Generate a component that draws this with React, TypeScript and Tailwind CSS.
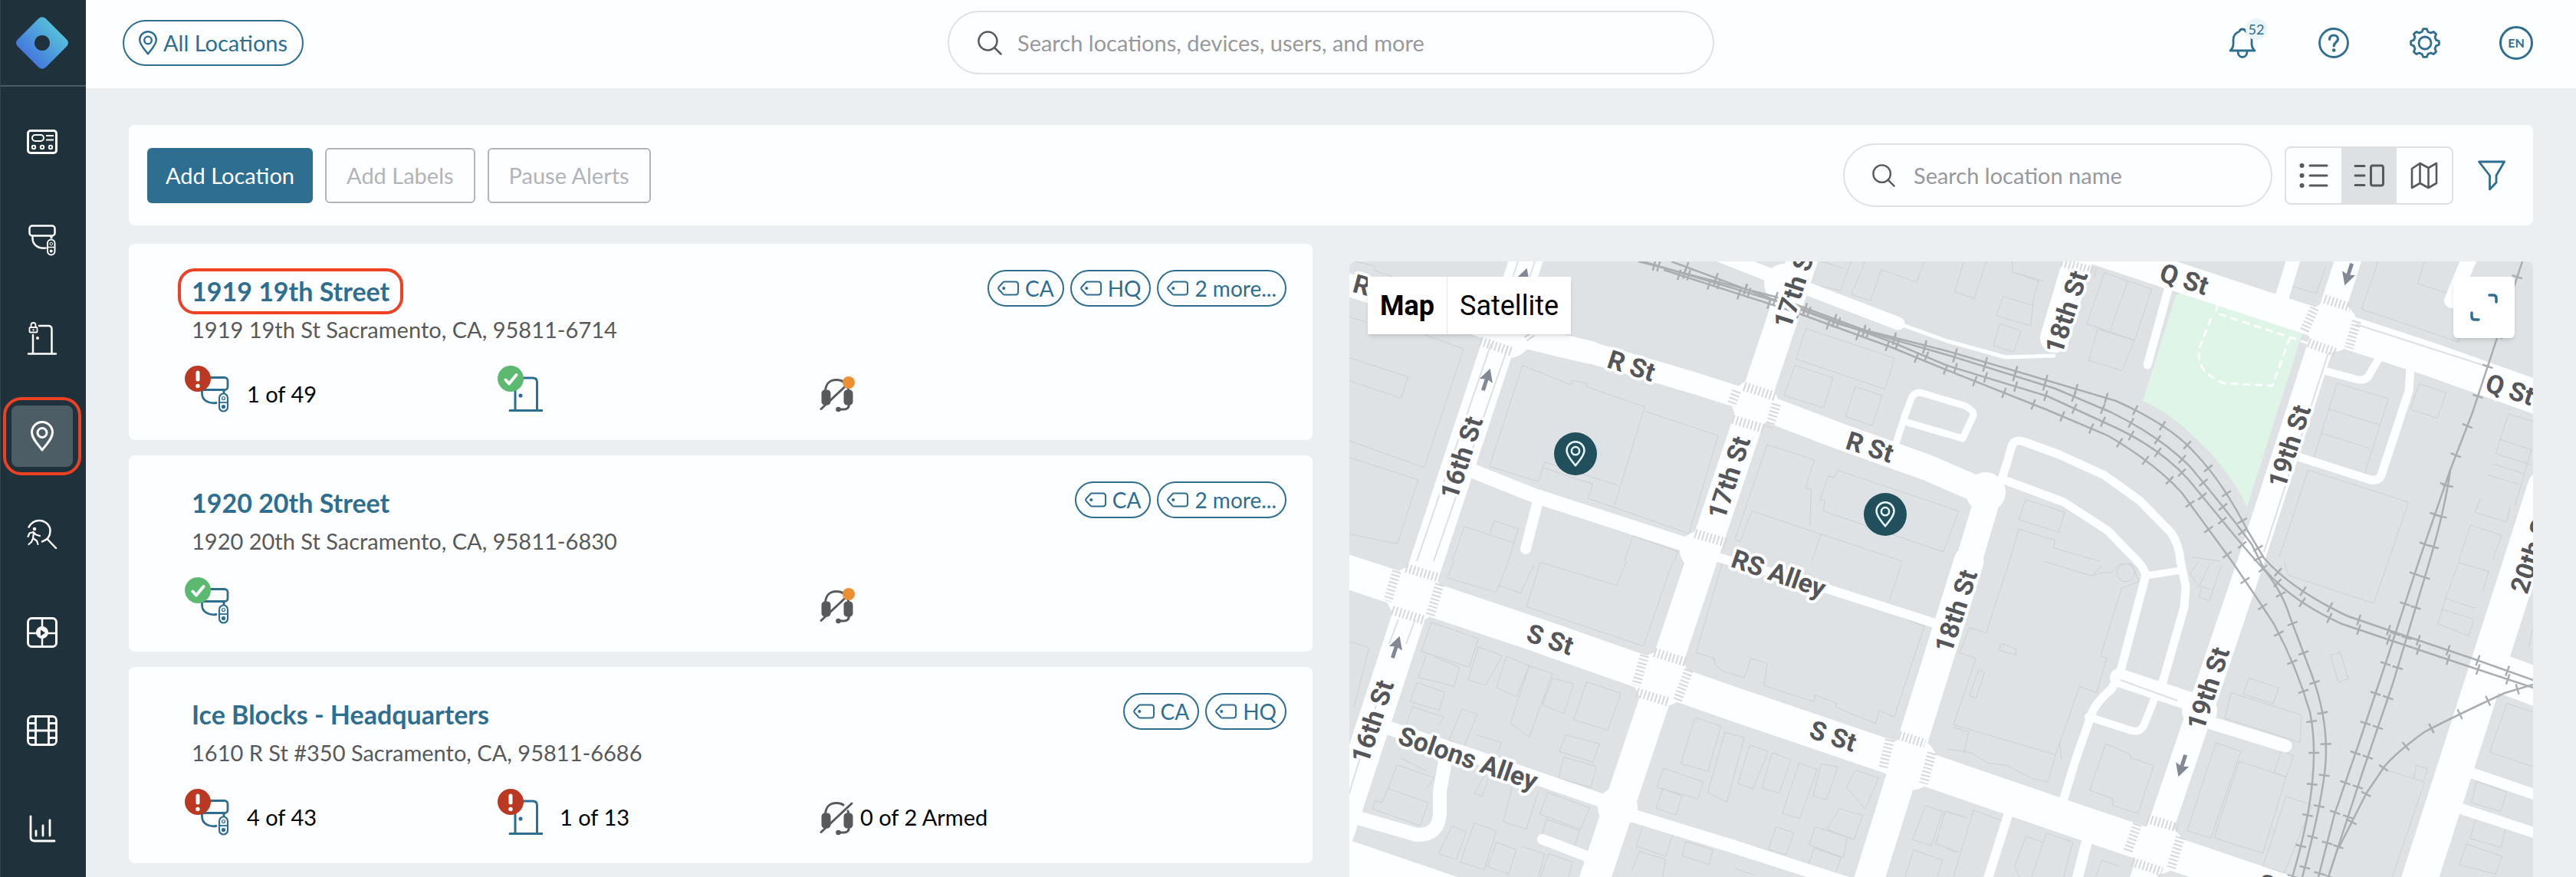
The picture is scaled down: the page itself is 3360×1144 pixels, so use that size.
import React from "react";

type IconProps = { className?: string };

/* ---------- icons ---------- */

function Logo() {
  return (
    <svg viewBox="0 0 68 68" className="size-[68px]" aria-hidden="true">
      <defs>
        <linearGradient id="logo-fill" x1="0.15" y1="0.8" x2="0.8" y2="0.2">
          <stop offset="0" stopColor="#4272dd" />
          <stop offset="1" stopColor="#57c1da" />
        </linearGradient>
      </defs>
      <path
        fillRule="evenodd"
        fill="url(#logo-fill)"
        d="M29 2.500 Q34 -2 39 2.500 L66 29.500 Q70 34 66 38.500 L39 65.500 Q34 70 29 65.500 L2 38.500 Q-2 34 2 29.500 Z M34 24 a10 10 0 1 0 0.010 0 Z"
      />
    </svg>
  );
}

function PinIcon({ className }: IconProps) {
  return (
    <svg viewBox="0 0 30 40" className={className} fill="none" stroke="currentColor" aria-hidden="true">
      <path d="M15 38 C9 30 1.500 23 1.500 15 a13.500 13.500 0 0 1 27 0 C28.500 23 21 30 15 38 Z" strokeLinejoin="round" />
      <circle cx="15" cy="15.500" r="6" />
    </svg>
  );
}

function PanelIcon() {
  return (
    <svg viewBox="0 0 40 32" className="h-8 w-10" fill="none" stroke="currentColor" strokeWidth="2" aria-hidden="true">
      <rect x="1.500" y="1.500" width="37" height="29" rx="3.500" strokeWidth="3" />
      <rect x="7" y="7" width="15" height="8" rx="4" />
      <path d="M25 8h10M25 13.500h10" />
      <circle cx="9" cy="23" r="2.200" />
      <circle cx="20" cy="23" r="2.200" />
      <circle cx="31" cy="23" r="2.200" />
    </svg>
  );
}

function CameraIcon() {
  return (
    <svg viewBox="0 0 40 44" className="h-11 w-10" fill="none" stroke="currentColor" strokeWidth="2.500" aria-hidden="true">
      <rect x="3.500" y="3.500" width="33" height="13" rx="3.500" />
      <path d="M7.500 17v3c0 8 7 13.500 17 12.500" strokeLinecap="round" />
      <path d="M32 17v3" strokeWidth="3" />
      <rect x="27" y="21.500" width="9.500" height="20" rx="4.700" strokeWidth="2" />
      <path d="M27 31.500h9.500" strokeWidth="1.500" />
      <circle cx="31.700" cy="27" r="1.800" strokeWidth="1" />
      <circle cx="31.700" cy="36.500" r="1.600" fill="currentColor" strokeWidth="1" />
    </svg>
  );
}

function DoorLockIcon() {
  return (
    <svg viewBox="0 0 40 44" className="h-11 w-10" fill="none" stroke="currentColor" strokeWidth="2.500" strokeLinecap="round" aria-hidden="true">
      <path d="M2 42.500h36M8 18v24M16 6h12q4.500 0 4.500 4.500v31.500" />
      <circle cx="14" cy="22" r="1.200" fill="currentColor" strokeWidth="1.500" />
      <rect x="3.500" y="8" width="10" height="6.500" rx="1" strokeWidth="1.800" />
      <path d="M5.500 8V5q0-3 3-3t3 3v3" strokeWidth="1.800" />
      <circle cx="8.500" cy="11.300" r="0.800" fill="currentColor" strokeWidth="0.800" />
    </svg>
  );
}

function PersonSearchIcon() {
  return (
    <svg viewBox="0 0 40 40" className="size-10" fill="none" stroke="currentColor" strokeWidth="2.500" strokeLinecap="round" strokeLinejoin="round" aria-hidden="true">
      <path d="M2.500 10.500C6 4.500 11 2 16 2c8 0 14.500 6 14.500 13.500 0 8-4.500 12-10.500 14M26.500 26 38 38" />
      <circle cx="10" cy="13" r="2.300" fill="currentColor" stroke="none" />
      <path d="M1.500 23l2-4.500 5-1.500 3.500 3.500 5 1.500M9 18.500 8 25l5 3.500 1.500 4.500M7.500 26.500 6 30l-3.500 3" strokeWidth="2.200" />
    </svg>
  );
}

function PlayGridIcon() {
  return (
    <svg viewBox="0 0 40 40" className="size-10" fill="none" stroke="currentColor" aria-hidden="true">
      <rect x="1.500" y="1.500" width="37" height="37" rx="5" strokeWidth="3" />
      <path d="M20 2v36M2 21h36" strokeWidth="2.500" />
      <circle cx="20" cy="20" r="8" fill="currentColor" stroke="none" />
      <path d="M18 16.500 24 20.500l-6 4Z" fill="#1f313a" stroke="none" />
    </svg>
  );
}

function FilmIcon() {
  return (
    <svg viewBox="0 0 40 40" className="size-10" fill="none" stroke="currentColor" strokeWidth="2.800" aria-hidden="true">
      <rect x="1.500" y="1.500" width="37" height="37" rx="5" />
      <path d="M11.500 2v36M28.500 2v36M2 20h36M2 10.500h9M29 10.500h9M2 29.500h9M29 29.500h9" />
    </svg>
  );
}

function ChartIcon() {
  return (
    <svg viewBox="0 0 36 36" className="size-9" fill="none" stroke="currentColor" strokeWidth="2.800" strokeLinecap="round" aria-hidden="true">
      <path d="M3 2v27q0 5 5 5h26" />
      <path d="M10 21v6M19 14v13M28 7v20" />
    </svg>
  );
}

function SearchIcon({ className }: IconProps) {
  return (
    <svg viewBox="0 0 32 32" className={className} fill="none" stroke="#58595b" strokeWidth="2.500" strokeLinecap="round" aria-hidden="true">
      <circle cx="13.500" cy="13.500" r="12" />
      <path d="M22 22 30.500 30.500" />
    </svg>
  );
}

function BellIcon() {
  return (
    <svg viewBox="0 0 36 40" className="h-10 w-9" fill="none" stroke="currentColor" strokeWidth="2.800" strokeLinecap="round" strokeLinejoin="round" aria-hidden="true">
      <path d="M2 30h32c-3-2.500-4-5-4-9v-5c0-7-3.500-9.500-8-11C21 1 15 1 14 5c-4.500 1.500-8 4-8 11v5c0 4-1 6.500-4 9Z" />
      <path d="M12 31c0 4.500 2.500 7.500 6 7.500s6-3 6-7.500" />
    </svg>
  );
}

function HelpIcon() {
  return (
    <svg viewBox="0 0 40 40" className="size-10" fill="none" stroke="currentColor" strokeWidth="2.800" aria-hidden="true">
      <circle cx="20" cy="20" r="18.500" />
      <path d="M14.500 15.500c0-3.500 2.300-5.500 5.500-5.500s5.500 2 5.500 5c0 4-5.300 4-5.300 9" strokeWidth="3.200" strokeLinecap="round" />
      <circle cx="20.200" cy="29.500" r="2.300" fill="currentColor" stroke="none" />
    </svg>
  );
}

function GearIcon() {
  const teeth = Array.from({ length: 8 }, (_, i) => {
    const at = (deg: number, r: number) => {
      const a = ((i * 45 + deg) * Math.PI) / 180;
      return `${(20 + r * Math.sin(a)).toFixed(2)} ${(20 - r * Math.cos(a)).toFixed(2)}`;
    };
    return `${i === 0 ? "M" : "L"}${at(-15, 15)} L${at(-7, 18.5)} L${at(7, 18.5)} L${at(15, 15)}`;
  }).join(" ");
  return (
    <svg viewBox="0 0 40 40" className="size-10" fill="none" stroke="currentColor" strokeWidth="2.800" strokeLinejoin="round" aria-hidden="true">
      <path d={`${teeth} Z`} />
      <circle cx="20" cy="20" r="8" />
    </svg>
  );
}

function ListIcon() {
  return (
    <svg viewBox="0 0 38 34" className="h-[34px] w-[38px]" stroke="#58595b" strokeWidth="3" strokeLinecap="round" aria-hidden="true">
      <path d="M14 4h22M14 17h22M14 30h22" />
      <g fill="#58595b" stroke="none">
        <circle cx="3.500" cy="4" r="3" />
        <circle cx="3.500" cy="17" r="3" />
        <circle cx="3.500" cy="30" r="3" />
      </g>
    </svg>
  );
}

function SplitIcon() {
  return (
    <svg viewBox="0 0 40 30" className="h-[30px] w-10" fill="none" stroke="#58595b" strokeWidth="3" strokeLinecap="round" aria-hidden="true">
      <path d="M2 2.500h12M2 15h12M2 27.500h12" />
      <rect x="22.500" y="2" width="16" height="26" rx="2.500" />
    </svg>
  );
}

function FoldedMapIcon() {
  return (
    <svg viewBox="0 0 36 36" className="size-9" fill="none" stroke="#58595b" strokeWidth="2.600" strokeLinejoin="round" aria-hidden="true">
      <path d="M2 9 12.500 2 23.500 8 34 2v26l-10.500 6-11-6L2 34ZM12.500 2v26M23.500 8v26" />
    </svg>
  );
}

function FilterIcon() {
  return (
    <svg viewBox="0 0 36 40" className="h-10 w-9" fill="none" stroke="currentColor" strokeWidth="2.800" strokeLinejoin="round" aria-hidden="true">
      <path d="M1.500 2h33L24 20v9L15.500 38V20Z" />
    </svg>
  );
}

function TagIcon() {
  return (
    <svg viewBox="0 0 28 20" className="h-5 w-7" fill="none" stroke="currentColor" strokeWidth="2" strokeLinejoin="round" aria-hidden="true">
      <path d="M9 1.500h14.500q3.500 0 3.500 3.500v10q0 3.500-3.500 3.500H9q-1 0-1.800-1L1.700 11.500q-1-1.500 0-3L7.200 2.500q.8-1 1.800-1Z" />
      <circle cx="8.300" cy="10" r="1.600" fill="currentColor" strokeWidth="1" />
    </svg>
  );
}

type Status = "alert" | "ok";

function StatusBadge({ status }: { status: Status }) {
  if (status === "alert") {
    return (
      <g>
        <circle cx="18" cy="18" r="17" fill="#bb3922" />
        <path d="M18 10v9" stroke="#fff" strokeWidth="5" strokeLinecap="round" />
        <circle cx="18" cy="27.500" r="2.700" fill="#fff" />
      </g>
    );
  }
  return (
    <g>
      <circle cx="18" cy="18" r="17" fill="#5cba70" />
      <path d="M11.500 19.500 16 24.500 25.500 13" fill="none" stroke="#fff" strokeWidth="4" strokeLinecap="round" strokeLinejoin="round" />
    </g>
  );
}

function CameraStatus({ status }: { status: Status }) {
  return (
    <svg viewBox="0 0 60 62" className="h-[62px] w-[60px]" role="img" aria-label={`Cameras: ${status}`}>
      <g fill="none" stroke="#2e6e91" strokeWidth="2.800">
        <rect x="20" y="16.500" width="37" height="16" rx="4" />
        <path d="M23.500 33v4c0 9 8 14 18.500 12.500" strokeLinecap="round" />
        <path d="M52 33v4" strokeWidth="3" />
        <rect x="46" y="37.500" width="11" height="23" rx="5.500" strokeWidth="2.200" />
        <path d="M46 49h11" strokeWidth="1.800" />
        <circle cx="51.500" cy="43.500" r="2" strokeWidth="1.200" />
        <circle cx="51.500" cy="54.500" r="2" fill="#2e6e91" strokeWidth="1.200" />
      </g>
      <StatusBadge status={status} />
    </svg>
  );
}

function DoorStatus({ status }: { status: Status }) {
  return (
    <svg viewBox="0 0 60 62" className="h-[62px] w-[60px]" role="img" aria-label={`Doors: ${status}`}>
      <g fill="none" stroke="#2e6e91" strokeWidth="3" strokeLinecap="round">
        <path d="M17 59.500h42M24 24v35M24 17h23q5.500 0 5.500 5.500v36.500" />
        <circle cx="31" cy="40" r="1.800" fill="#2e6e91" strokeWidth="1.500" />
      </g>
      <StatusBadge status={status} />
    </svg>
  );
}

function HeadsetStatus({ pending }: { pending: boolean }) {
  return (
    <svg viewBox="0 0 48 50" className="h-[50px] w-12" role="img" aria-label="Monitoring disarmed">
      <g fill="none" stroke="#58595b" strokeWidth="3" strokeLinecap="round">
        <path d="M8.500 22C9 12 15 7.500 23 7.500c4 0 7 1 9 2.500M38 18l1 4M3 45.500 43 8M39.500 39c0 5-3 7-7 7h-7" />
        <rect x="5" y="22" width="9" height="17" rx="3" fill="#58595b" />
        <rect x="34" y="22" width="9" height="17" rx="3" fill="#58595b" />
        <circle cx="25.500" cy="46" r="1.800" fill="#58595b" />
      </g>
      {pending && <circle cx="39" cy="11" r="8" fill="#ec8f33" />}
    </svg>
  );
}

/* ---------- sidebar ---------- */

const navItems = [
  { label: "Dashboard", icon: <PanelIcon /> },
  { label: "Cameras", icon: <CameraIcon /> },
  { label: "Doors", icon: <DoorLockIcon /> },
  { label: "Locations", icon: <PinIcon className="h-10 w-[30px] stroke-3" />, active: true },
  { label: "People search", icon: <PersonSearchIcon /> },
  { label: "Video walls", icon: <PlayGridIcon /> },
  { label: "Clips", icon: <FilmIcon /> },
  { label: "Reports", icon: <ChartIcon /> },
];

function Sidebar() {
  return (
    <aside className="w-28 shrink-0 border-l border-[#33464f] bg-[#1f313a] text-white">
      <a href="#home" aria-label="Home" className="flex h-[113px] items-center justify-center border-b-2 border-[#4d5d65] pr-1">
        <Logo />
      </a>
      <nav className="flex flex-col items-center gap-12 pt-8 pr-1">
        {navItems.map((item) => (
          <a
            key={item.label}
            href={`#${item.label.toLowerCase().replace(" ", "-")}`}
            aria-label={item.label}
            aria-current={item.active ? "page" : undefined}
            className={
              item.active
                ? "relative flex size-20 items-center justify-center rounded-lg bg-[#4d5d65]"
                : "relative flex size-20 items-center justify-center"
            }
          >
            {item.icon}
            {item.active && <span className="absolute -inset-[11px] rounded-3xl border-4 border-[#ee4023]" />}
          </a>
        ))}
      </nav>
    </aside>
  );
}

/* ---------- header ---------- */

function Header() {
  return (
    <header className="grid h-[115px] grid-cols-[1fr_minmax(0,1000px)_1fr] items-center bg-[#fdfeff] px-14 pb-1 text-[#2e6e91]">
      <button className="-ml-2 flex h-[60px] items-center gap-2 justify-self-start rounded-full border-2 border-[#2e6e91] px-[19px] text-[29px]">
        <PinIcon className="h-8 w-6 stroke-3" />
        All Locations
      </button>
      <div className="flex h-[83px] items-center gap-5 rounded-full border-2 border-[#dfe1e4] px-[37px]">
        <SearchIcon className="size-8 shrink-0" />
        <input
          type="search"
          aria-label="Search locations, devices, users, and more"
          placeholder="Search locations, devices, users, and more"
          className="h-full w-full bg-transparent text-[29px] outline-none placeholder:text-[#97999c]"
        />
      </div>
      <div className="flex items-center gap-[75px] justify-self-end">
        <button aria-label="Notifications, 52 unread" className="relative flex size-11 items-center justify-center">
          <BellIcon />
          <span className="absolute -top-2.5 -right-2.5 flex size-7 items-center justify-center rounded-full bg-[#e8f4f7] text-lg">
            52
          </span>
        </button>
        <button aria-label="Help" className="flex size-11 items-center justify-center">
          <HelpIcon />
        </button>
        <button aria-label="Settings" className="flex size-11 items-center justify-center">
          <GearIcon />
        </button>
        <button aria-label="Language" className="flex size-11 items-center justify-center rounded-full border-3 border-[#2e6e91] text-base font-bold">
          EN
        </button>
      </div>
    </header>
  );
}

/* ---------- toolbar ---------- */

function Toolbar() {
  return (
    <section className="flex h-[131px] items-center justify-between rounded-lg bg-[#fdfeff] pr-9 pl-6">
      <div className="flex gap-4 text-[29px]">
        <button className="h-[72px] rounded-md bg-[#2e6e91] px-6 text-white">Add Location</button>
        <button className="h-[72px] rounded-md border-2 border-[#b1b4ba] px-[26px] text-[#b1b4ba]">Add Labels</button>
        <button className="h-[72px] rounded-md border-2 border-[#b1b4ba] px-[26px] text-[#b1b4ba]">Pause Alerts</button>
      </div>
      <div className="flex items-center gap-4">
        <div className="flex h-[83px] w-[560px] items-center gap-6 rounded-full border-2 border-[#dfe1e4] px-9">
          <SearchIcon className="size-[30px] shrink-0" />
          <input
            type="search"
            aria-label="Search location name"
            placeholder="Search location name"
            className="h-full w-full bg-transparent text-[29px] outline-none placeholder:text-[#97999c]"
          />
        </div>
        <div className="flex h-[76px] overflow-hidden rounded-lg border-2 border-[#dee1e4]">
          <button aria-label="List view" className="flex w-[72px] items-center justify-center">
            <ListIcon />
          </button>
          <button aria-label="Split view" aria-pressed="true" className="flex w-[72px] items-center justify-center bg-[#dee1e4]">
            <SplitIcon />
          </button>
          <button aria-label="Map view" className="flex w-[72px] items-center justify-center">
            <FoldedMapIcon />
          </button>
        </div>
        <button aria-label="Filter" className="ml-4 text-[#2e6e91]">
          <FilterIcon />
        </button>
      </div>
    </section>
  );
}

/* ---------- location cards ---------- */

type Location = {
  name: string;
  address: string;
  tags: string[];
  highlighted?: boolean;
  cameras: { status: Status; text?: string };
  doors?: { status: Status; text?: string };
  monitoring: { pending: boolean; text?: string };
};

const locations: Location[] = [
  {
    name: "1919 19th Street",
    address: "1919 19th St Sacramento, CA, 95811-6714",
    tags: ["CA", "HQ", "2 more..."],
    highlighted: true,
    cameras: { status: "alert", text: "1 of 49" },
    doors: { status: "ok" },
    monitoring: { pending: true },
  },
  {
    name: "1920 20th Street",
    address: "1920 20th St Sacramento, CA, 95811-6830",
    tags: ["CA", "2 more..."],
    cameras: { status: "ok" },
    monitoring: { pending: true },
  },
  {
    name: "Ice Blocks - Headquarters",
    address: "1610 R St #350 Sacramento, CA, 95811-6686",
    tags: ["CA", "HQ"],
    cameras: { status: "alert", text: "4 of 43" },
    doors: { status: "alert", text: "1 of 13" },
    monitoring: { pending: false, text: "0 of 2 Armed" },
  },
];

function LocationCard({ location }: { location: Location }) {
  const { cameras, doors, monitoring } = location;
  return (
    <article className="rounded-lg bg-[#fdfeff] pt-[34px] pr-[34px] pb-9 pl-[82px]">
      <div className="flex items-start justify-between">
        <h2 className="mt-1.5 text-[34px] leading-[44px] font-bold text-[#2e6e91]">
          <a href="#location" className="relative inline-block">
            {location.name}
            {location.highlighted && (
              <span className="absolute -inset-x-[18px] -inset-y-2 rounded-[22px] border-4 border-[#ee4023]" />
            )}
          </a>
        </h2>
        <div className="flex gap-2">
          {location.tags.map((tag) => (
            <button key={tag} className="flex h-12 items-center gap-2 rounded-full border-2 border-[#2e6e91] px-[11px] text-[28px] text-[#2e6e91]">
              <TagIcon />
              {tag}
            </button>
          ))}
        </div>
      </div>
      <p className="mt-2 text-[29px] leading-10 text-[#58595b]">{location.address}</p>
      <div className="mt-[26px] -ml-2.5 grid h-[62px] grid-cols-[408px_420px_1fr] text-[29px] leading-8 text-black">
        <div className="flex items-end gap-[22px]">
          <CameraStatus status={cameras.status} />
          <span className="mb-2">{cameras.text}</span>
        </div>
        <div className="flex items-end gap-[22px]">
          {doors && <DoorStatus status={doors.status} />}
          <span className="mb-2">{doors?.text}</span>
        </div>
        <div className="flex items-end gap-1.5">
          <HeadsetStatus pending={monitoring.pending} />
          <span className="mb-2">{monitoring.text}</span>
        </div>
      </div>
    </article>
  );
}

/* ---------- map ---------- */

const roads: { width: number; d: string }[] = [
  { width: 43, d: "M254 9 L121 412 L-10 812" },
  { width: 40, d: "M616 3 L341 824 L330 858" },
  { width: 34, d: "M854 325 L828 412" },
  { width: 39, d: "M828 412 L690 853" },
  { width: 38, d: "M976 0 L940 121" },
  { width: 34, d: "M1329 0 L1196 412 L1050 842" },
  { width: 47, d: "M1580 316 L1417 824 L1405 860" },
  { width: 38, d: "M950 -8 L1166 63 L1300 107" },
  { width: 44, d: "M1290 103 L1428 148 L1580 202" },
  { width: 30, d: "M10 49 L209 110 L335 140" },
  { width: 28, d: "M325 137 L471 180 L549 205" },
  { width: 34, d: "M549 207 L654 247 L774 290 L848 322" },
  { width: 18, d: "M480 4 L610 55" },
  { width: 17, d: "M600 50 L736 102" },
  { width: 5, d: "M736 102 L800 125 L876 146 L939 144" },
  { width: 19, d: "M180 294 L260 326 L470 394" },
  { width: 12, d: "M490 404 L640 447 L790 495" },
  { width: 14, d: "M268 326 L250 396" },
  { width: 44, d: "M0 420 L94 451 L261 507 L523 599 L800 693 L957 747 L1255 848" },
  { width: 18, d: "M60 626 L175 664 L360 728" },
  { width: 17, d: "M380 741 L520 784 L700 842" },
  { width: 18, d: "M146 668 L138 712 L138 742 Q136 770 108 769 L28 746" },
  { width: 14, d: "M272 775 L330 797" },
  { width: 46, d: "M-10 790 L160 848" },
  { width: 11, d: "M866 320 L878 283 L884 262 Q888 251 902 257 L946 273 L1005 300 L1051 333 L1092 375 Q1103 392 1104 412 L1111 445 L1109 472 L1078 580" },
  { width: 11, d: "M874 306 L952 335 L1009 372 L1046 410 Q1060 424 1058 434 L1046 479 L1025 559 L1014 579 Q992 598 988 612 L967 672 L950 728" },
  { width: 9, d: "M1059 431 L1105 424" },
  { width: 24, d: "M1024 564 L1120 596" },
  { width: 10, d: "M1070 592 L1058 622 Q1053 637 1040 633 L984 615" },
  { width: 17, d: "M1134 620 L1241 653" },
  { width: 9, d: "M730 268 L743 227 L752 202 Q757 189 768 193 L822 209 Q836 216 834 222 L820 252 L748 231" },
  { width: 11, d: "M1088 58 L1061 156" },
  { width: 18, d: "M1253 14 L1234 76" },
  { width: 20, d: "M1483 12 L1458 72" },
  { width: 10, d: "M1290 163 L1334 175 Q1347 178 1352 166 L1364 146" },
  { width: 11, d: "M1258 276 L1352 306 Q1364 308 1367 297 L1402 190 L1404 160" },
  { width: 14, d: "M1480 687 L1580 721" },
  { width: 14, d: "M1464 733 L1580 771" },
  { width: 50, d: "M1515 556 L1585 582" },
  { width: 12, d: "M882 734 L851 832" },
  { width: 14, d: "M986 762 L968 832" },
];

/* Widened paving where two streets cross. */
const junctions = [
  { x: 228, y: 117, r: 30 },
  { x: 549, y: 205, r: 30 },
  { x: 104, y: 455, r: 36 },
  { x: 427, y: 566, r: 36 },
  { x: 752, y: 676, r: 35 },
  { x: 1302, y: 106, r: 33 },
  { x: 1075, y: 787, r: 33 },
  { x: 850, y: 322, r: 26 },
  { x: 476, y: 398, r: 25 },
  { x: 370, y: 733, r: 26 },
  { x: 587, y: 50, r: 26 },
  { x: 1129, y: 607, r: 23 },
];

const laneMarks = [
  "M240 21 L219 84 M205 128 L108 412",
  "M262 21 L241 84 M227 132 L130 412",
  "M84 488 L72 520",
  "M106 488 L94 520",
  "M58 590 L-10 812",
  "M1297 140 L1213 400",
  "M1333 103 L1501 157",
  "M1026 567 L1100 594",
];

const crosswalks = [
  "M191 125 L233 139",
  "M250 112 L258 124",
  "M535 184 L575 197",
  "M525 190 L518 209",
  "M577 207 L567 240",
  "M520 227 L560 239",
  "M471 376 L512 388",
  "M94 421 L138 434",
  "M82 425 L70 464",
  "M138 442 L125 484",
  "M76 476 L118 489",
  "M418 531 L460 544",
  "M405 535 L394 574",
  "M463 554 L447 596",
  "M395 583 L437 596",
  "M737 639 L771 650",
  "M725 645 L716 682",
  "M780 662 L769 702",
  "M1061 748 L1101 760",
  "M1048 755 L1035 792",
  "M1104 772 L1092 812",
  "M1041 804 L1080 817",
  "M949 22 L996 36",
  "M1292 70 L1326 81",
  "M1279 82 L1265 113",
  "M1334 99 L1324 134",
  "M1271 127 L1307 140",
];

const rails = [
  "M397 21 L575 67 L690 110 L800 138 L899 167 L1020 203 Q1092 235 1124 272 Q1160 310 1192 373 L1213 408 Q1250 450 1323 484 L1396 509 L1485 539 L1564 567",
  "M440 21 L660 103 L800 143 L941 187 L1014 218 Q1075 248 1116 288 Q1160 340 1197 390 L1213 422 Q1250 465 1315 494 L1443 537 L1564 577",
  "M403 21 L601 80 L727 126 L800 157 L931 197 L1009 233 Q1075 262 1114 305 L1184 390 L1203 412 Q1235 445 1247 485 L1276 562 Q1298 622 1293 680 Q1288 730 1263 824",
  "M430 32 L601 87 L727 133 L800 163 L931 215 L1009 248 Q1072 285 1106 323 L1171 412 L1203 459 L1226 494 Q1256 550 1273 609 Q1290 690 1250 824",
  "M1550 21 L1485 218 L1456 293 L1415 412 L1375 535 L1336 652 L1305 742 L1284 824",
  "M1456 293 Q1450 340 1429 412 L1381 572 L1341 689 L1297 824",
  "M1564 573 L1527 584 Q1460 615 1422 635 Q1385 662 1370 680 L1347 714 L1310 787",
];

/* Building footprints, one entry per map sheet. */
const footprints: { sheet: string; d: string }[] = [
  {
    sheet: "scale(.523 .3333)",
    d: "M38 280 80 300 M225 350 323 405 225 870 38 765 M38 440 185 515 167 598 38 530 M38 830 210 918 158 1168 38 1130 M470 470 590 545 595 528 630 540 632 555 775 632 700 1015 M470 470 388 865 510 925 525 848 710 940 M525 872 645 935 633 990 885 1128 958 745 778 650 M1215 62 1270 90 M1215 160 1263 177 1290 62 M1365 95 1453 145 1472 62 M1365 95 1338 217 1290 192 1325 62 M1177 325 1398 442 1374 563 1152 445Z M1150 470 1244 518 1221 636 1122 588Z M1300 553 1367 588 1342 706 1276 670Z M1080 780 1198 840 1175 950 1190 955 1187 1100 M1080 780 1000 1150 1013 1160 1042 1040 1415 1235 M1255 880 1558 1040 1520 1200 1220 1040 1225 1000 1212 995 1233 903 1248 908Z M325 1100 450 1165 M400 1078 460 1110 435 1236 M400 1078 388 1130 M325 1100 295 1236 M745 1138 857 1198 850 1236 M745 1138 725 1236 M1215 1130 1192 1236 M50 62 100 80 103 100 215 160",
  },
  {
    sheet: "translate(800 0) scale(.523 .3333)",
    d: "M98 62 67 208 18 182 40 68 M162 62 162 105 240 140 M173 110 228 140 215 205 208 315 121 275 140 200 212 235 M131 307 184 335 165 418 115 392Z M392 107 510 172 467 372 348 307Z M450 140 405 338 M375 328 467 372 435 490 352 450Z M880 62 860 160 920 188 945 80 M1075 62 1033 250 1275 378 1282 345 M1190 62 1173 150 1262 195 M972 540 1100 600 1040 900 912 840Z M950 640 1077 703 M932 735 1055 795 M1177 542 1244 577 1222 676 1155 642Z M1400 660 1461 690 M1400 660 1388 715 1368 815 1457 860 M1378 760 1457 800 1415 1020 M1360 855 1437 893 M1350 900 1425 935 M1330 990 1315 1045 1395 1083 1405 1020 M1305 1095 1383 1135 1360 1230 M1305 1095 1275 1236 M900 880 1150 1005 1100 1236 M900 880 828 1220 M195 995 293 1045 277 1123 178 1073Z M178 1110 268 1155 265 1185 380 1236 M178 1110 155 1236 M610 1220 680 1236",
  },
  {
    sheet: "translate(0 412) scale(.523 .3333)",
    d: "M300 0 282 65 405 122 435 0 M412 95 465 125 500 10 M515 5 705 95 730 0 M515 5 480 178 772 333 845 0 M40 315 87 338 M87 340 50 570 M970 0 903 358 948 380 950 405 970 430 1023 457 1040 380 1080 400 1073 487 1197 550 1200 525 1252 555 1253 573 1350 635 1360 585 1397 610 1472 255 1385 200 M1385 155 1418 0 M243 240 360 303 337 415 218 353Z M250 375 313 415 300 490 210 455 230 370 M360 335 420 370 378 485 335 465Z M430 372 487 410 455 530 405 495Z M487 410 545 440 487 688 440 635Z M545 458 598 480 573 597 520 563Z M630 472 715 517 683 662 598 620Z M207 475 277 513 262 583 190 550Z M195 570 275 610 262 640 M195 570 180 640 M320 578 357 600 325 725 287 700Z M578 680 662 715 645 787 562 745Z M573 767 655 803 640 885 560 850Z M355 680 418 710 408 745 M165 770 230 820 M157 797 250 848 233 885 M157 797 135 890 235 945 215 1035 97 970 103 938 120 945 135 890 M375 840 350 910 370 920 385 850 M445 880 422 1020 480 1048 510 900 M533 905 637 965 615 1050 513 990Z M530 1010 613 1055 600 1115 518 1075Z M295 1037 330 1060 305 1168 260 1145Z M350 1025 405 1055 375 1207 315 1178Z M405 1100 455 1130 435 1225 383 1195Z M465 1115 525 1145 510 1236 M535 1145 595 1178 585 1236 M535 1145 515 1236 M900 612 965 645 933 822 865 793Z M975 670 1023 690 980 943 932 905Z M1037 720 1083 745 1045 890 1007 870Z M1093 750 1140 777 1110 908 1067 888Z M1160 790 1205 815 1162 1007 1118 987Z M1215 793 1257 805 1228 935 1195 918Z M1300 818 1358 848 1325 970 1278 885Z M1260 968 1318 995 1297 1090 1230 1050Z M822 810 922 865 907 930 805 885Z M820 890 867 920 853 993 803 968Z M772 1030 845 1070 827 1155 753 1115Z M877 1097 945 1130 935 1187 868 1153Z M762 1135 827 1168 820 1236 M762 1135 742 1215 M1102 1040 1147 1063 1127 1150 1083 1127Z M1200 1040 1280 1080 1270 1160 1185 1110Z M1198 1122 1265 1160 1250 1220 1183 1188Z M1475 957 1518 980 1490 1113 1443 1090Z M1525 978 1568 1000 M1525 978 1500 1105 1560 1140 M1445 1130 1518 1170 1505 1236 M1445 1130 1425 1236 M1000 1203 1048 1228",
  },
  {
    sheet: "translate(800 412) scale(.523 .3333)",
    d: "M155 0 97 280 55 260 30 360 72 380 15 640 270 758 330 490 372 515 398 380 382 372 435 105 478 80 460 10 430 12 410 45 385 45 360 58 240 0 M445 10a22 35 0 1 0 .1 0 M385 20 360 58 M135 322 173 345 170 367 128 348Z M78 425 93 435 72 535 55 527Z M270 758 250 865 210 850 150 800 100 790 60 750 0 735 M15 650 53 668 42 752 M280 710 285 775 M627 0 605 50 628 100 655 10 M683 20 653 155 627 140 635 100 655 110 M840 0 850 55 1063 165 1100 0 M1275 5 1350 40 1335 120 M1275 5 1243 145 1313 183 1320 180 M1243 145 1223 245 1300 293 1313 230 M1233 188 1310 225 M955 368 980 358 1000 460 975 473Z M752 457 827 497 812 558 738 520Z M708 515 883 602 880 710 M708 515 692 615 880 710 M395 715 455 755 457 770 515 800 475 988 412 955 413 930 355 897Z M670 710 732 745 657 1083 598 1055Z M728 783 845 845 787 1143 665 1083Z M832 743 863 760 845 845 815 828Z M845 920 910 955 840 1220 787 1195Z M1170 800 1198 812 1187 863 1100 820 M1170 800 1163 850 M1190 865 1110 1236 M1395 557 1461 590 M1395 557 1353 748 1461 805 M1320 862 1395 903 1380 980 1307 945Z M1320 1003 1393 1045 1380 1120 1303 1085Z M1295 1107 1383 1155 1367 1225 1277 1188Z M65 975 135 1015 M65 975 15 1236 M0 980 50 1005 M0 1125 22 1140 M197 1077 235 1100 M197 1077 167 1195 180 1236 M247 1065 313 1100 290 1236 M247 1065 210 1236 M385 1170 430 1195 M385 1170 370 1236 M1461 260 1450 330",
  },
];

const arrows = [
  { x: 247, y: 44, angle: 18 },
  { x: 199, y: 175, angle: 18 },
  { x: 81, y: 524, angle: 18 },
  { x: 1106, y: 679, angle: 198 },
  { x: 1323, y: 38, angle: 198 },
];

const streetLabels = [
  { text: "R St", x: 56, y: 57, angle: 15 },
  { text: "R St", x: 388, y: 157, angle: 18 },
  { text: "R St", x: 699, y: 263, angle: 18 },
  { text: "17th St", x: 601, y: 54, angle: -72 },
  { text: "17th St", x: 515, y: 303, angle: -72 },
  { text: "16th St", x: 166, y: 277, angle: -72 },
  { text: "16th St", x: 50, y: 621, angle: -72 },
  { text: "18th St", x: 955, y: 87, angle: -72 },
  { text: "18th St", x: 811, y: 477, angle: -72 },
  { text: "19th St", x: 1246, y: 262, angle: -72 },
  { text: "19th St", x: 1140, y: 578, angle: -72 },
  { text: "20th St", x: 1562, y: 400, angle: -72 },
  { text: "Q St", x: 1109, y: 44, angle: 18 },
  { text: "Q St", x: 1534, y: 188, angle: 18 },
  { text: "RS Alley", x: 580, y: 428, angle: 19 },
  { text: "S St", x: 282, y: 514, angle: 18 },
  { text: "S St", x: 651, y: 640, angle: 18 },
  { text: "S St", x: 1236, y: 840, angle: 18 },
  { text: "Solons Alley", x: 175, y: 669, angle: 19 },
];

function StreetMap() {
  return (
    <svg viewBox="20 21 1544 803" preserveAspectRatio="xMidYMid slice" className="absolute inset-0 size-full bg-[#dee2e4]" role="img" aria-label="Street map">
      <path d="M1098 66 Q1104 60 1114 63 L1263 115 L1191 341 Q1166 290 1124 252 Q1090 218 1055 203 Z" fill="#dff5e8" />
      <g fill="none" stroke="#cdd0d2" strokeWidth="1">
        {footprints.map((f) => (
          <path key={f.sheet} transform={f.sheet} d={f.d} vectorEffect="non-scaling-stroke" />
        ))}
      </g>
      <g fill="none" stroke="#fdfeff" strokeLinecap="round" strokeLinejoin="round">
        {roads.map((road) => (
          <path key={road.d} d={road.d} strokeWidth={road.width} />
        ))}
        <path d="M1153 77 L1150 88 L1247 120 L1271 128 M1247 120 L1224 183 L1161 180 Q1122 165 1129 133 L1145 93" strokeWidth="3" strokeDasharray="10 6" strokeLinecap="butt" />
      </g>
      <g fill="#fdfeff">
        {junctions.map((j) => (
          <circle key={`${j.x}-${j.y}`} cx={j.x} cy={j.y} r={j.r} />
        ))}
      </g>
      <g fill="none" stroke="#dee0e2" strokeWidth="2">
        {laneMarks.map((d) => (
          <path key={d} d={d} />
        ))}
      </g>
      <g fill="none" stroke="#d6d8da" strokeWidth="12" strokeDasharray="2 3">
        {crosswalks.map((d) => (
          <path key={d} d={d} />
        ))}
      </g>
      <g fill="none" stroke="#aaaeb1">
        {rails.map((d) => (
          <path key={d} d={d} strokeWidth="2.500" />
        ))}
        {rails.map((d) => (
          <path key={`ties-${d}`} d={d} strokeWidth="14" strokeDasharray="2.500 38.500" strokeDashoffset="-20" />
        ))}
      </g>
      <g fill="#828994">
        {arrows.map((a) => (
          <path key={`${a.x}-${a.y}`} transform={`translate(${a.x} ${a.y}) rotate(${a.angle})`} d="M0 -15 L9 2 L2.500 0 V15 H-2.500 V0 L-9 2 Z" />
        ))}
      </g>
      <g
        fontFamily="Roboto, sans-serif"
        fontSize="34"
        fontWeight="700"
        fill="#55565a"
        stroke="#fdfeff"
        strokeWidth="8"
        strokeLinejoin="round"
        paintOrder="stroke"
        textAnchor="middle"
      >
        {streetLabels.map((l) => (
          <text key={`${l.text}-${l.x}`} transform={`translate(${l.x} ${l.y}) rotate(${l.angle})`} y="12">
            {l.text}
          </text>
        ))}
      </g>
    </svg>
  );
}

function MapPanel() {
  return (
    <section aria-label="Map" className="relative mt-[23px] overflow-hidden rounded-t-lg font-[Roboto,sans-serif]">
      <StreetMap />
      <button
        aria-label="1919 19th Street"
        className="absolute top-[31.3%] left-[19.1%] flex size-14 -translate-1/2 items-center justify-center rounded-full bg-[#214f5c] text-[#e6f6fa]"
      >
        <PinIcon className="h-[34px] w-[26px] stroke-3" />
      </button>
      <button
        aria-label="1920 20th Street"
        className="absolute top-[41.1%] left-[45.3%] flex size-14 -translate-1/2 items-center justify-center rounded-full bg-[#214f5c] text-[#e6f6fa]"
      >
        <PinIcon className="h-[34px] w-[26px] stroke-3" />
      </button>
      <div className="absolute top-5 left-6 flex h-[75px] bg-white text-4xl text-black shadow-md">
        <button aria-pressed="true" className="border-r border-[#e4e6e8] px-4 font-bold">
          Map
        </button>
        <button className="px-4">Satellite</button>
      </div>
      <button aria-label="Full screen" className="absolute top-5 right-6 flex size-20 items-center justify-center rounded-md bg-white text-[#2e6e91] shadow-md">
        <svg viewBox="0 0 36 36" className="size-9" fill="none" stroke="currentColor" strokeWidth="3.500" strokeLinecap="round" aria-hidden="true">
          <path d="M25 2h5q4 0 4 4v5M2 25v5q0 4 4 4h5" />
        </svg>
      </button>
    </section>
  );
}

export default function App() {
  return (
    <div className="flex min-h-screen bg-[#ebeff2] font-[Lato,sans-serif]">
      <Sidebar />
      <div className="flex min-w-0 flex-1 flex-col">
        <Header />
        <main className="flex flex-1 flex-col gap-6 px-14 pt-12">
          <Toolbar />
          <div className="grid flex-1 grid-cols-2 gap-12">
            <div className="flex flex-col gap-5 pb-4">
              {locations.map((location) => (
                <LocationCard key={location.name} location={location} />
              ))}
            </div>
            <MapPanel />
          </div>
        </main>
      </div>
    </div>
  );
}
